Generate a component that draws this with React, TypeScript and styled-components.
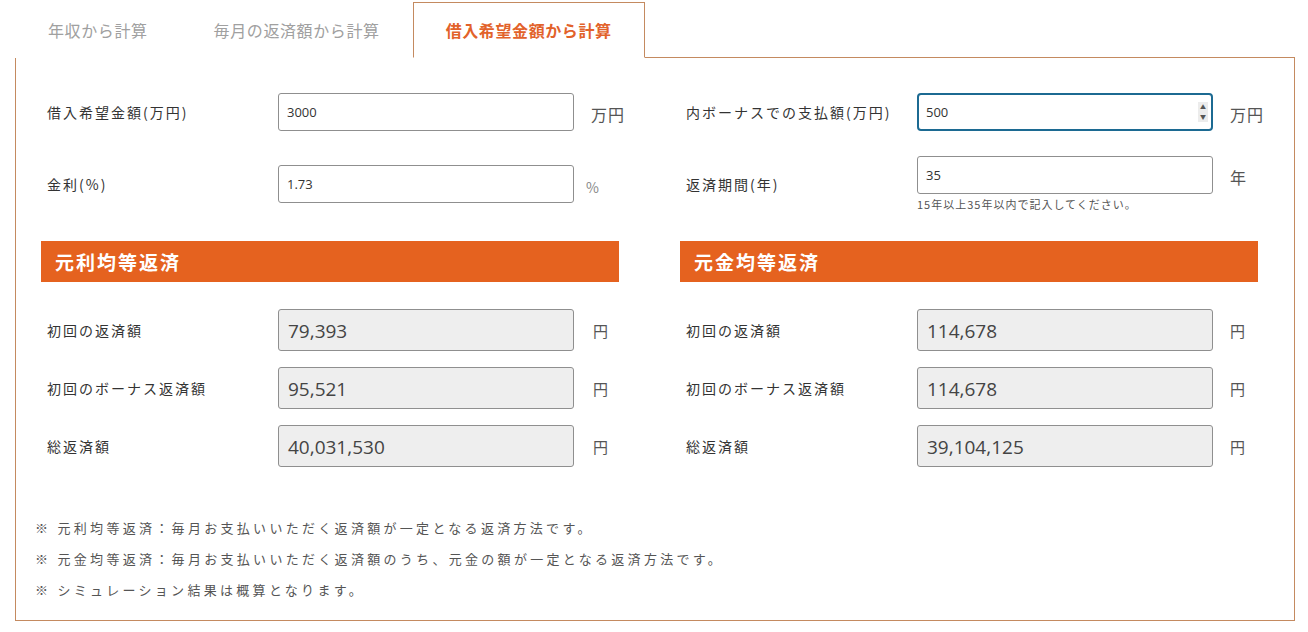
import React from "react";
import styled, { createGlobalStyle } from "styled-components";

const GlobalStyle = createGlobalStyle`
	html, body {
		margin: 0;
		padding: 0;
		background: #fff;
	}
	body {
		font-family: "Noto Sans CJK JP", "Open Sans", sans-serif;
		color: #333;
	}
`;

const Wrap = styled.div`
	width: 1308px;
	height: 632px;
	padding: 2px 0 0 15px;
	box-sizing: border-box;
`;

const Tabs = styled.div`
	display: flex;
	height: 55px;
`;

const Tab = styled.div<{ active?: boolean }>`
	padding: 0 32px;
	display: flex;
	align-items: center;
	font-size: 16px;
	letter-spacing: 0.6px;
	color: ${(props) => (props.active ? "#e2622a" : "#a0a0a0")};
	font-weight: ${(props) => (props.active ? 700 : 400)};
	border: 1px solid ${(props) => (props.active ? "#c48a60" : "transparent")};
	border-bottom: 1px solid ${(props) => (props.active ? "#fff" : "transparent")};
	background: #fff;
	position: relative;
	z-index: 1;
	margin-bottom: -1px;
	box-sizing: border-box;
`;

const Panel = styled.div`
	width: 1280px;
	height: 564px;
	box-sizing: border-box;
	border: 1px solid #c48a60;
	padding: 35px 37px 0 25px;
`;

const InputGrid = styled.div`
	display: grid;
	grid-template-columns: 578px 578px;
	column-gap: 61px;
	grid-template-rows: 38px 56px;
	row-gap: 25px;
	align-items: center;
`;

const Field = styled.div`
	display: grid;
	grid-template-columns: 237px 296px auto;
	align-items: center;
`;

const Label = styled.div`
	padding-left: 6px;
	font-size: 14px;
	letter-spacing: 2px;
	color: #333;
	white-space: nowrap;
`;

const InputBox = styled.div`
	display: flex;
	flex-direction: column;
	position: relative;
`;

const TextInput = styled.input<{ focused?: boolean }>`
	box-sizing: border-box;
	width: 296px;
	height: 38px;
	padding: 0 8px;
	font-family: "Open Sans", "Noto Sans CJK JP", sans-serif;
	font-size: 13px;
	color: #333;
	border: ${(props) => (props.focused ? "2px solid #1c6a92" : "1px solid #8f8f8f")};
	border-radius: ${(props) => (props.focused ? "4px" : "3px")};
	padding-left: ${(props) => (props.focused ? "7px" : "8px")};
	outline: none;
	background: #fff;
`;

const Spinner = styled.div`
	position: absolute;
	right: 5px;
	top: 9px;
	width: 10px;
	height: 20px;
	background: #ececec;
	display: flex;
	flex-direction: column;
	align-items: center;
	justify-content: space-between;
	font-size: 6px;
	line-height: 10px;
	color: #555;
`;

const Hint = styled.div`
	margin-top: 3px;
	font-size: 11px;
	color: #555;
	letter-spacing: 1px;
	height: 15px;
	line-height: 15px;
	white-space: nowrap;
`;

const Unit = styled.div<{ size?: number; offset?: number; shift?: number; light?: boolean }>`
	padding-left: ${(props) => props.offset ?? 17}px;
	font-size: ${(props) => props.size ?? 16}px;
	color: ${(props) => (props.light ? "#888" : "#555")};
	letter-spacing: 1px;
	margin-top: ${(props) => props.shift ?? 4}px;
	white-space: nowrap;
`;

const ResultGrid = styled.div`
	margin-top: 29px;
	display: grid;
	grid-template-columns: 578px 578px;
	column-gap: 61px;
`;

const Section = styled.div`
	display: flex;
	flex-direction: column;
`;

const SectionHeader = styled.div`
	height: 41px;
	background: #e5621f;
	color: #fff;
	font-size: 19px;
	font-weight: 700;
	letter-spacing: 2px;
	display: flex;
	align-items: center;
	padding-left: 14px;
	margin-bottom: 27px;
`;

const ResultRows = styled.div`
	display: flex;
	flex-direction: column;
	gap: 16px;
`;

const ResultBox = styled.div`
	box-sizing: border-box;
	width: 296px;
	height: 42px;
	border: 1px solid #8f8f8f;
	border-radius: 3px;
	background: #eeeeee;
	display: flex;
	align-items: center;
	padding: 2px 0 0 9px;
	font-family: "Open Sans", "Noto Sans CJK JP", sans-serif;
	font-size: 19px;
	color: #444;
`;

const Notes = styled.div`
	margin: 45px 0 0 -6px;
	display: flex;
	flex-direction: column;
`;

const Note = styled.div`
	font-size: 13px;
	line-height: 31px;
	letter-spacing: 3.3px;
	color: #555;
	white-space: nowrap;
`;

type Result = { label: string; value: string };

const left: Result[] = [
	{ label: "初回の返済額", value: "79,393" },
	{ label: "初回のボーナス返済額", value: "95,521" },
	{ label: "総返済額", value: "40,031,530" },
];

const right: Result[] = [
	{ label: "初回の返済額", value: "114,678" },
	{ label: "初回のボーナス返済額", value: "114,678" },
	{ label: "総返済額", value: "39,104,125" },
];

function ResultSection({ title, rows, unitOffset }: { title: string; rows: Result[]; unitOffset: number }) {
	return (
		<Section>
			<SectionHeader>{title}</SectionHeader>
			<ResultRows>
				{rows.map((r) => (
					<Field key={r.label}>
						<Label>{r.label}</Label>
						<ResultBox>{r.value}</ResultBox>
						<Unit size={15} offset={unitOffset} shift={0}>
							円
						</Unit>
					</Field>
				))}
			</ResultRows>
		</Section>
	);
}

export default function App() {
	return (
		<>
			<GlobalStyle />
			<Wrap>
				<Tabs>
					<Tab>年収から計算</Tab>
					<Tab>毎月の返済額から計算</Tab>
					<Tab active>借入希望金額から計算</Tab>
				</Tabs>
				<Panel>
					<InputGrid>
						<Field>
							<Label>借入希望金額(万円)</Label>
							<InputBox>
								<TextInput defaultValue="3000" />
							</InputBox>
							<Unit>万円</Unit>
						</Field>
						<Field>
							<Label>内ボーナスでの支払額(万円)</Label>
							<InputBox>
								<TextInput focused defaultValue="500" />
								<Spinner>
									<span>▲</span>
									<span>▼</span>
								</Spinner>
							</InputBox>
							<Unit>万円</Unit>
						</Field>
						<Field>
							<Label>金利(%)</Label>
							<InputBox>
								<TextInput defaultValue="1.73" />
							</InputBox>
							<Unit size={14} offset={12} shift={6} light>
								%
							</Unit>
						</Field>
						<Field>
							<Label>返済期間(年)</Label>
							<InputBox>
								<TextInput defaultValue="35" />
								<Hint>15年以上35年以内で記入してください。</Hint>
							</InputBox>
							<Unit shift={-14}>年</Unit>
						</Field>
					</InputGrid>
					<ResultGrid>
						<ResultSection title="元利均等返済" rows={left} unitOffset={19} />
						<ResultSection title="元金均等返済" rows={right} unitOffset={17} />
					</ResultGrid>
					<Notes>
						<Note>※ 元利均等返済：毎月お支払いいただく返済額が一定となる返済方法です。</Note>
						<Note>※ 元金均等返済：毎月お支払いいただく返済額のうち、元金の額が一定となる返済方法です。</Note>
						<Note>※ シミュレーション結果は概算となります。</Note>
					</Notes>
				</Panel>
			</Wrap>
		</>
	);
}
